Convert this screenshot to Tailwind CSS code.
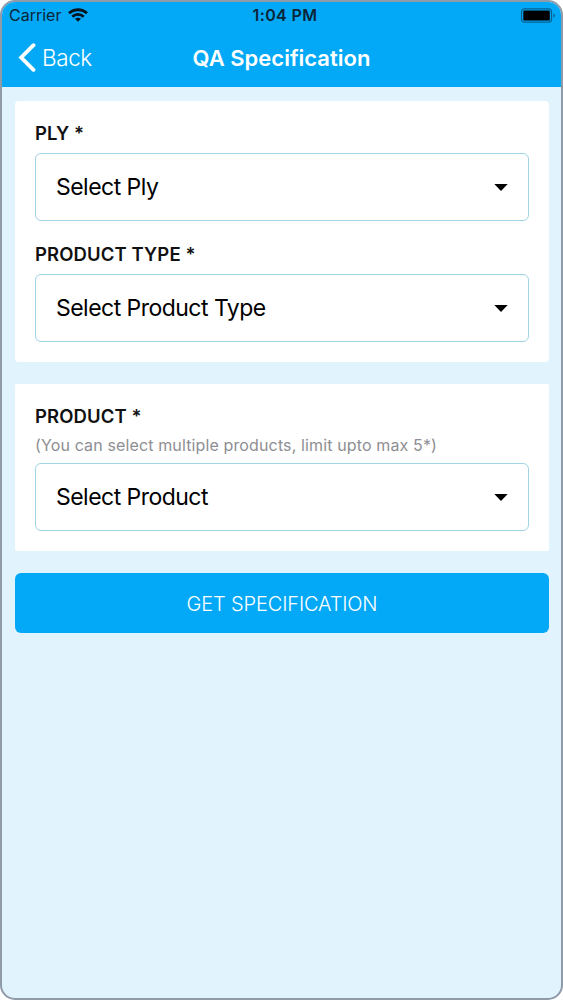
<!DOCTYPE html>
<html lang="en">
<head>
    <meta charset="UTF-8">
    <meta name="viewport" content="width=device-width, initial-scale=1.0">
    <title>QA Specification</title>
    <script src="https://cdn.jsdelivr.net/npm/@tailwindcss/browser@4"></script>
</head>
<body class="bg-white font-['Inter','Liberation_Sans',sans-serif]">
    <div class="h-[1000px] w-[563px] overflow-hidden rounded-[15px] border-2 border-[#8f9ba9] bg-[#e1f4fd] text-black">
        <header class="h-[85px] bg-[#03a9f6]">
            <!-- Status bar -->
            <div class="grid h-[26px] grid-cols-3 items-center pr-[5px] pl-[7px] text-[#0b2538]">
                <div class="flex items-center gap-[7px]">
                    <span class="text-[16px] leading-none">Carrier</span>
                    <svg class="h-[14px] w-[20px]" viewBox="0 0 20 14" fill="none" stroke="#051520" stroke-width="2.8">
                        <path d="M1 5.2C6 .6 14 .6 19 5.2" />
                        <path d="M4.300 8.700C7.500 5.700 12.500 5.700 15.700 8.700" />
                        <path d="M7 10.800C8.700 9.300 11.300 9.300 13 10.800L10 13.800Z" fill="#051520" stroke="none" />
                    </svg>
                </div>
                <span class="pl-[5px] text-center text-[16px] leading-none font-semibold tracking-[0.4px]">1:04 PM</span>
                <svg class="h-[15px] w-[36px] justify-self-end" viewBox="0 0 36 15">
                    <rect x="1.500" y=".8" width="30" height="13.400" rx="3" fill="none" stroke="#07618f" stroke-width="1.200" />
                    <rect x="3.300" y="2.500" width="26.500" height="10" rx="1.200" fill="#000" />
                    <path d="M33.500 5.500Q35 6 35 7.500T33.500 9.500Z" fill="#07618f" />
                </svg>
            </div>
            <!-- Navigation -->
            <div class="grid h-[59px] grid-cols-3 items-center px-[16px] text-white">
                <div class="flex items-center gap-[6px]">
                    <svg class="h-[29px] w-[18px]" viewBox="0 0 18 29" fill="none" stroke="currentColor" stroke-width="3.800" stroke-linecap="round" stroke-linejoin="miter">
                        <path d="M15.500 2.200L3.200 14.500L15.500 26.800" />
                    </svg>
                    <span class="pt-[2px] text-[22.5px] leading-none font-light tracking-[-0.4px]">Back</span>
                </div>
                <h1 class="flex justify-center text-[22px] leading-none font-semibold whitespace-nowrap">QA Specification</h1>
            </div>
        </header>

        <main class="pt-[14px] pr-[12px] pl-[13px]">
            <section class="h-[261px] rounded-[4px] bg-white px-[20px] pt-[20px]">
                <div class="h-[32px] text-[18.5px] leading-[24px] font-semibold text-[#111]">PLY *</div>
                <div class="flex h-[68px] items-center justify-between rounded-[6px] border border-[#a0d3e4] px-[20px]">
                    <span class="text-[23px] tracking-[-0.53px]">Select Ply</span>
                    <svg class="h-[7px] w-[14px]" viewBox="0 0 14 7"><path d="M.3 0H13.700L7 7Z" /></svg>
                </div>
                <div class="mt-[21px] h-[32px] text-[18.5px] leading-[24px] font-semibold tracking-[0.1px] text-[#111]">PRODUCT TYPE *</div>
                <div class="flex h-[68px] items-center justify-between rounded-[6px] border border-[#a0d3e4] px-[20px]">
                    <span class="text-[23px] tracking-[-0.53px]">Select Product Type</span>
                    <svg class="h-[7px] w-[14px]" viewBox="0 0 14 7"><path d="M.3 0H13.700L7 7Z" /></svg>
                </div>
            </section>

            <section class="mt-[22px] h-[167px] rounded-[2px] bg-white px-[20px] pt-[20px]">
                <div class="h-[24px] text-[18.5px] leading-[24px] font-semibold tracking-[0.1px] text-[#111]">PRODUCT *</div>
                <p class="h-[35px] pt-[5px] text-[16px] leading-[24px] tracking-[0.13px] text-[#8e8e93]">(You can select multiple products, limit upto max 5*)</p>
                <div class="flex h-[68px] items-center justify-between rounded-[6px] border border-[#a0d3e4] px-[20px]">
                    <span class="text-[23px] tracking-[-0.53px]">Select Product</span>
                    <svg class="h-[7px] w-[14px]" viewBox="0 0 14 7"><path d="M.3 0H13.700L7 7Z" /></svg>
                </div>
            </section>

            <button class="mt-[22px] h-[60px] w-full rounded-[6px] bg-[#03a9f6] pt-px text-[20px] font-light tracking-[-0.15px] text-white">GET SPECIFICATION</button>
        </main>
    </div>
</body>
</html>
